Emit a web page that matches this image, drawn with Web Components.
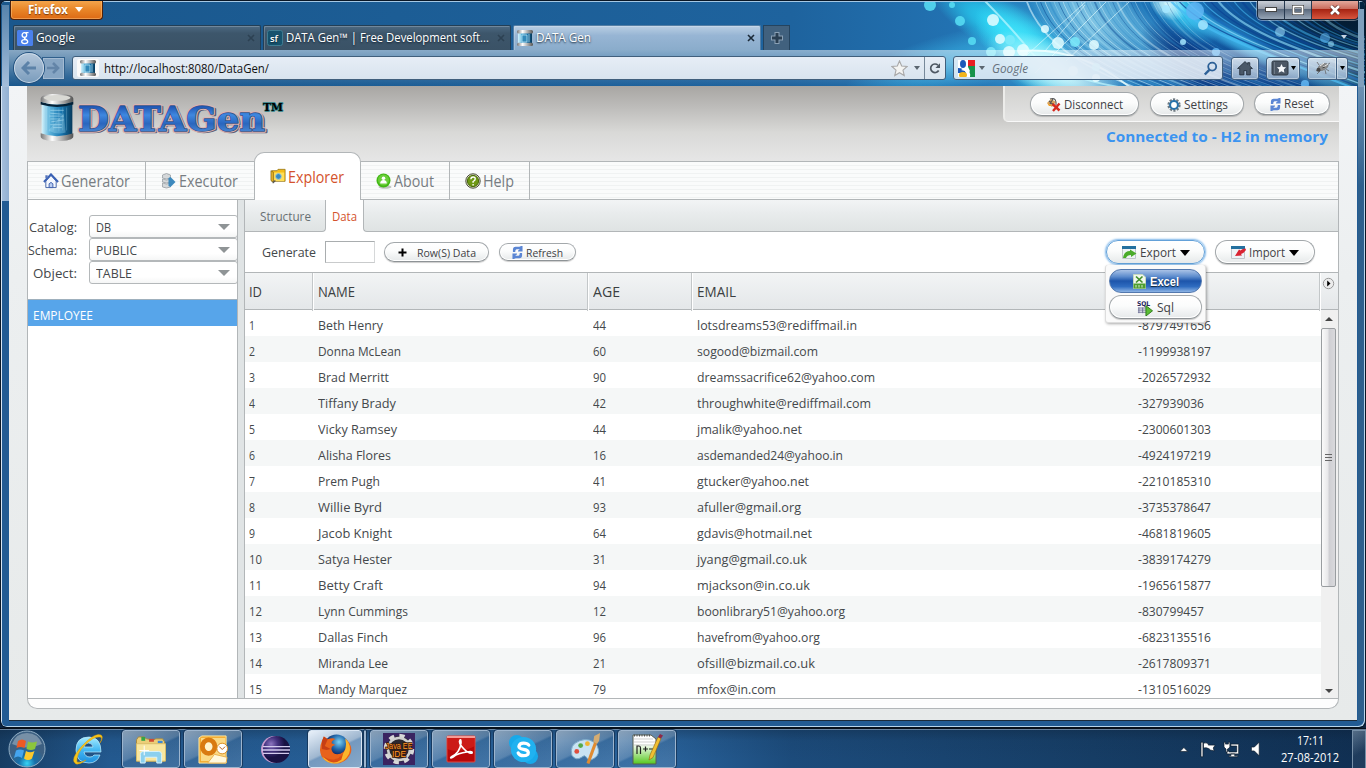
<!DOCTYPE html>
<html lang="en">
<head>
<meta charset="utf-8">
<title>DATA Gen</title>
<style>
html,body{margin:0;width:1366px;height:768px;overflow:hidden;background:#0c2340;font-family:"Open Sans","Noto Sans",sans-serif}
</style>
</head>
<body>
<desk-top></desk-top>
<script>
const fitQueue=[];
function define(name,html,setup){
  customElements.define(name,class extends HTMLElement{
    constructor(){super();this.attachShadow({mode:'open'});}
    connectedCallback(){
      if(this.ready)return;this.ready=true;
      this.shadowRoot.innerHTML=typeof html==='function'?html(this):html;
      if(setup)setup(this);
    }
  });
}
/* Text run whose glyphs are condensed or widened to a set advance width */
define('fit-text',`<style>:host{display:inline-block;white-space:nowrap;flex:none}span{display:inline-block;transform-origin:0 50%}</style><span><slot></slot></span>`,el=>fitQueue.push(el));

const cyl=`<linearGradient id="m"><stop offset="0" stop-color="#777"/><stop offset=".35" stop-color="#fff"/><stop offset="1" stop-color="#555"/></linearGradient><linearGradient id="g"><stop offset="0" stop-color="#d8f4fc"/><stop offset=".25" stop-color="#5eb4dc"/><stop offset=".65" stop-color="#1674ae"/><stop offset="1" stop-color="#073a5c"/></linearGradient>`;
const ICONS={
google:`<svg viewBox="0 0 16 16"><rect width="16" height="16" rx="1.5" fill="#4a80ec"/><g fill="none" stroke="#fff" stroke-width="1.3"><circle cx="7.4" cy="5" r="2.300"/><path d="M8.500 2.700h3M8.200 7.400c-2 1 .6 1.600 1.800 2.600"/><ellipse cx="7.700" cy="11.600" rx="3" ry="2"/></g></svg>`,
sf:`<svg viewBox="0 0 16 16"><rect x=".5" y=".5" width="15" height="15" rx="2" fill="#16536e" stroke="#3f7c92"/><text x="3" y="11.500" font-family="Open Sans" font-size="9.500" font-weight="600" fill="#fff">sf</text></svg>`,
db:`<svg viewBox="0 0 16 16"><defs>${cyl}</defs><path d="M1 2h14v12H1z" fill="url(#g)"/><path d="M5 5h5v7H5zM3 4v8M12 4v8" stroke="#c5ecf8" stroke-width=".7" fill="#3289b9"/><rect x="0" y="0" width="16" height="3.500" rx="1.500" fill="url(#m)"/><rect x="0" y="12.800" width="16" height="3.200" rx="1.500" fill="url(#m)"/></svg>`,
logo:`<svg viewBox="0 0 36 50"><defs>${cyl}</defs><path d="M2 7h32v36q-16 6-32 0z" fill="url(#g)"/><path d="M1 8q17 6 34 0v3q-17 5-34 0z" fill="#052238"/><g stroke="#bfe9f7" stroke-width=".7" opacity=".8"><path d="M7 13v25M10 14v26M28 14v24M14 15v23M20 15v24M24 14v24" opacity=".45"/><path d="M11 17h14M11 20l12 1M10 23h15M11 26h10M12 29l13-2M11 32h12M14 35h9"/></g><path d="M9 38l16-18 2 20q-9 3-18-2" fill="#b7e9f8" opacity=".3"/><path d="M1 5q0-5 17-5t17 5v3q-17 6-34 0z" fill="url(#m)"/><ellipse cx="18" cy="4" rx="14" ry="3" fill="#d9d9d4"/><path d="M1 41q17 6 34 0v3q0 5-17 5T1 44z" fill="url(#m)"/></svg>`,
home:`<svg viewBox="0 0 16 16"><path d="M8 1.500L1 8h2v6h4v-4h2.500v4H13V8h2L12.500 5.700V2.500h-2v1.400z" fill="#4a5868" stroke="#26323f" stroke-width=".8"/></svg>`,
bm:`<svg viewBox="0 0 18 16"><rect x="1" y="1" width="16" height="14" rx="1.500" fill="#4b5765" stroke="#2e3843"/><path d="M10.500 4l1.400 2.900 3.200.4-2.300 2.200.6 3.200-2.900-1.500-2.900 1.500.6-3.200-2.300-2.200 3.200-.4z" fill="#f4f7fa"/><path d="M3.500 2v12" stroke="#6d7986"/></svg>`,
bug:`<svg viewBox="0 0 18 16"><path d="M3 11l4-3M4 14l4-4M13 9l3 2M12 10l1 4M6 5L4 2M14 5l3-2" stroke="#666" stroke-width=".8"/><ellipse cx="10" cy="7" rx="5.500" ry="3" fill="#8b8b8b" stroke="#666" stroke-width=".5" transform="rotate(-25 10 7)"/><path d="M7 6l4-3M9 8l6-4" stroke="#eee"/><circle cx="5.500" cy="9.800" r="2" fill="#444"/><path d="M9 8l3-1" stroke="#444"/></svg>`,
star:`<svg viewBox="0 0 18 18"><path d="M9 1l2.300 5.300 5.700.6-4.300 3.800 1.300 5.700L9 13.400 4 16.400l1.300-5.700L1 6.900l5.700-.6z" fill="#f4f4f2" stroke="#a9a9a9" stroke-width="1.200"/></svg>`,
reload:`<svg viewBox="0 0 14 14"><path d="M11.300 9.300A5 5 0 1 1 10.500 3.200" fill="none" stroke="#4e5863" stroke-width="2"/><path d="M12.800 1v5.500H7.500z" fill="#4e5863"/></svg>`,
goog4:`<svg viewBox="0 0 17 17"><path fill="#fff" d="M0 0h17v17H0z"/><path d="M9 0h8v6H9z" fill="#e81e22"/><path d="M10 6h7v11h-5q1-5-3-7z" fill="#16924a"/><path d="M0 8q6 0 8 5H0z" fill="#1d58b8"/><ellipse cx="5" cy="4" rx="3" ry="4" fill="#1d58b8"/><ellipse cx="5" cy="15" rx="4" ry="3" fill="#f2b51b"/><path d="M8 0h2v7l2 4-2 3-3-3-4-1 5-3z" fill="#fff"/></svg>`,
mag:`<svg viewBox="0 0 15 15"><circle cx="9.200" cy="5.600" r="4" fill="none" stroke="#2c6097" stroke-width="1.800"/><path d="M6.300 8.800L1.800 13.500" stroke="#2c6097" stroke-width="2.400"/></svg>`,
disc:`<svg viewBox="0 0 15 15"><path d="M1 6l4-4 5 3-4 5z" fill="#d9a35c"/><path d="M1 6l2 3h3" fill="#f29b1d"/><path d="M4 2q5-2 6 3v3M3 4l6 5M7 2l-3 5" stroke="#555" stroke-width="1.100" fill="none"/><path d="M6.500 7l7 6.500M13.500 6.500L7 14" stroke="#d72b1f" stroke-width="2.400"/></svg>`,
gear:`<svg viewBox="0 0 15 15"><circle cx="7.500" cy="7.500" r="5.800" fill="none" stroke="#707a82" stroke-width="2.600" stroke-dasharray="2.300 1.350"/><circle cx="7.500" cy="7.500" r="4.200" fill="#fff" stroke="#2871a9" stroke-width="2.200"/></svg>`,
sync:`<svg viewBox="0 0 12 14"><path d="M1 6.500V4Q1 .8 4 .8h4L10 0h1.500v6H6.500V5l2-1.500H5Q3.500 3.500 3.500 6.500zM11 7.500V10q0 3.200-3 3.200H4L2 14H.5V8h5v1l-2 1.500H7q1.500 0 1.500-3z" fill="#5b86d4"/></svg>`,
house:`<svg viewBox="0 0 17 16"><path d="M3 8l5.500-6L14 8v7H3z" fill="#f3f7fe" stroke="#4262a8"/><path d="M1 9l7.500-8L16 9" fill="none" stroke="#3b62b5" stroke-width="2.200"/><path d="M2.500 2h2.500v3H2.500z" fill="#5776bc"/><path d="M6.500 15v-4q2-3 4 0v4z" fill="#b9cdf1" stroke="#3d5fae"/></svg>`,
exec:`<svg viewBox="0 0 15 16"><g fill="#d5d8da" stroke="#8f979c" stroke-width=".7"><path d="M1 2q4-3 8 0v3q-4 2-8 0zM1 6q4 2 8 0v3q-4 2-8 0zM1 10q4 2 8 0v4q-4 2-8 0z"/></g><path d="M7 5l2-1 5 5-5 5-2-1z" fill="#3d89bd"/></svg>`,
folder:`<svg viewBox="0 0 18 16"><path d="M2 2h6l1-1.500h8V14H2z" fill="#f5bd18" stroke="#8c6c10" stroke-width=".8"/><path d="M4 4h12v9.500H4z" fill="#ffdf58"/><path d="M1 2l3 2v11l-3-2z" fill="#dfae26" stroke="#6d5410" stroke-width=".6"/><circle cx="9.500" cy="8.500" r="3.200" fill="#368bc0" stroke="#9ac7dc"/><path d="M3 16l3-3" stroke="#555" stroke-width="1.500"/></svg>`,
about:`<svg viewBox="0 0 16 16"><ellipse cx="9" cy="14" rx="6.500" ry="1.800" fill="#bfc3bf"/><circle cx="7.500" cy="7.500" r="7" fill="#42b814"/><circle cx="7.500" cy="7" r="5.500" fill="#6bce3a"/><circle cx="7.500" cy="5.300" r="1.800" fill="#fff"/><path d="M4.200 10.500q0-3.500 3.300-3.500t3.300 3.500z" fill="#fff"/></svg>`,
help:`<svg viewBox="0 0 16 16"><circle cx="8" cy="8" r="7.200" fill="#dcdec0" stroke="#4c4f3e" stroke-width="1"/><circle cx="8" cy="8" r="5.600" fill="#6f9914" stroke="#486b09"/><path d="M5.900 6.200q0-2.200 2.200-2.200t2.100 2q0 1.300-2.100 2.500v1.200M8.100 11v1.500" stroke="#fff" stroke-width="1.400" fill="none"/></svg>`,
plus:`<svg viewBox="0 0 9 9"><path d="M4.500 .5v8M.5 4.500h8" stroke="#000" stroke-width="2"/></svg>`,
exp:`<svg viewBox="0 0 15 13"><path d="M.5.5h13v12H.5z" fill="#eef2f6" stroke="#c0c6cc"/><path d="M0 0h14v3H0z" fill="#23709f"/><path d="M1 12q1-7 7-7V3.500l6.500 4L9 11V9Q5 9 4 12z" fill="#4bab2b"/></svg>`,
imp:`<svg viewBox="0 0 15 13"><path d="M.5.5h13v12H.5z" fill="#eef2f6" stroke="#c0c6cc"/><path d="M0 0h14v3H0z" fill="#23709f"/><path d="M14.500 2.500q-3 0-5 2L8 3.500 4 10l7-.5-1-1.500q3-1 5-4z" fill="#d92332"/></svg>`,
xls:`<svg viewBox="0 0 13 15"><path d="M1 .5h8.500L12.500 3v11.500H.5V.5z" fill="#f1f7ec" stroke="#c7d8bf"/><path d="M3 2.500l6.500 6M9.500 2.500L3 8.500" stroke="#438f2b" stroke-width="1.700"/><path d="M.5 9.500h12v5H.5z" fill="#4d9e2f"/><path d="M3 11v2.500M6 11v2.500M9 11v2.500" stroke="#d5eccc"/></svg>`,
sql:`<svg viewBox="0 0 17 17"><text x="0" y="6" font-family="DejaVu Sans" font-size="7" font-weight="700" fill="#26265c" textLength="14" lengthAdjust="spacingAndGlyphs">SQL</text><path d="M1 8.500h11M1 10.700h11M1 13h11M2 8v6M6 8v6" stroke="#6d7095" stroke-width="1"/><path d="M9.500 6l7 5.500-7 5.500z" fill="#5bbd35" stroke="#2c7b18"/></svg>`,
start:`<svg viewBox="0 0 38 38"><defs><radialGradient id="o" cy=".9"><stop offset="0" stop-color="#38d4f5"/><stop offset=".45" stop-color="#176fa9"/><stop offset="1" stop-color="#3d6082"/></radialGradient></defs><circle cx="19" cy="19" r="18" fill="url(#o)" stroke="#91aec4"/><path d="M4 14Q8 3 19 3t15 11q-15 7-30 0" fill="#fff" opacity=".3"/><path d="M10 11q4-3 8 0l-1.500 7q-4-2-8 0z" fill="#ee5a24"/><path d="M20 11.500q4 2 9 0l-2 7.500q-4 2-8.500 0z" fill="#8cc63c"/><path d="M8 20.500q4-2 8 0L14 28q-4-3-8 0z" fill="#45a5ee"/><path d="M18 21q4 2.500 8.500 0L24 28.500q-4 3-8 0z" fill="#fdc92c"/></svg>`,
ie:`<svg viewBox="0 0 34 34"><defs><linearGradient id="i" x2="0" y2="1"><stop stop-color="#a5ecff"/><stop offset=".5" stop-color="#45b8f2"/><stop offset="1" stop-color="#1d8ede"/></linearGradient></defs><path d="M30 20H13q1 5 6 5 3 0 4-2h6q-3 8-11 8Q5 31 5 18T18 5q12 0 12 15M13 15h9q-.5-4-4.500-4T13 15" fill="url(#i)" stroke="#bdeeff" stroke-width=".7" fill-rule="evenodd"/><path d="M5 32Q-2 28 11 14T30 3q3 2-1 8 3-6 0-6-6-1-15 8T6 30q4 1 9-2-6 5-10 4" fill="#f7c51a" stroke="#d99d0a" stroke-width=".5"/></svg>`,
explorer:`<svg viewBox="0 0 34 30"><path d="M2 5l2-3h6l2 2 8 1 2-1h7l2 3v20H2z" fill="#eccf78" stroke="#a88a40"/><path d="M7 2h4v4H7z" fill="#34a545"/><path d="M15 4h5v3h-5z" fill="#d14b31"/><path d="M24 6h5v3h-5z" fill="#3c88d4"/><path d="M2 9h30v18H2z" fill="#f8e69f" stroke="#d8bd68"/><path d="M6 29V20q0-3 3-3h16q3 0 3 3v9h-5v-6H11v6z" fill="#8bd0ee" stroke="#d9f4fd"/><path d="M10 11v10M5 16h10" stroke="#fff"/></svg>`,
outlook:`<svg viewBox="0 0 32 30"><path d="M1 3l3-2h25v28H1z" fill="#f2a92d" stroke="#ffe9a4"/><path d="M3 3h25v24H3z" fill="#fbd984"/><ellipse cx="11" cy="12" rx="6.500" ry="7" fill="#fff3cc" stroke="#d97a10" stroke-width="5"/><circle cx="25" cy="14" r="5.500" fill="#fff" stroke="#d98c20"/><path d="M22 12l3 3 3-3" fill="none" stroke="#b35c18"/><path d="M10 29l7-9 13 3-1 6z" fill="#fff8dd" stroke="#e8b14c"/></svg>`,
eclipse:`<svg viewBox="0 0 32 30"><defs><radialGradient id="e" cx=".3" cy=".3"><stop stop-color="#8d76c0"/><stop offset=".5" stop-color="#43317e"/><stop offset="1" stop-color="#191244"/></radialGradient></defs><circle cx="15" cy="15" r="14" fill="#c99ccf"/><circle cx="17" cy="15" r="14" fill="url(#e)"/><path d="M3 12h28M2 15.500h29M3 19h27" stroke="#d4ccef" stroke-width="1.500"/></svg>`,
firefox:`<svg viewBox="0 0 34 32"><defs><radialGradient id="f" cx=".6" cy=".3"><stop stop-color="#7bd2f5"/><stop offset=".6" stop-color="#2166a9"/><stop offset="1" stop-color="#102a67"/></radialGradient></defs><circle cx="18" cy="14" r="13" fill="url(#f)"/><path d="M3 8l2-5 4 3q5-2 8 0-4 1-4 4l4 2q-5 1-4 5 2 6 9 4 8-3 6-15 8 8 4 16-5 9-15 9Q2 30 1 17q0-5 2-9" fill="#e8621b"/><path d="M27 5q7 7 4 16-5 10-15 10-8 0-13-7 10 7 19 0 8-7 5-19" fill="#fbb52d"/><path d="M5 24q12 7 20-4l-2 7q-10 7-18-3" fill="#d94d14"/><path d="M3 8l2-5 4 3-3 7 6 3-4 1-5-1z" fill="#c63f15"/></svg>`,
jee:`<svg viewBox="0 0 32 32"><rect width="32" height="32" fill="#3a2461"/><circle cx="16" cy="16" r="13" fill="#34313b" stroke="#d8d8d8" stroke-width="4.500" stroke-dasharray="5.100 5.110"/><circle cx="16" cy="16" r="11" fill="#2b2830" stroke="#d0d0d0" stroke-width="2.500"/><g font-family="Liberation Sans" font-size="9.500" fill="#ff9a2b" stroke="#3a1808" stroke-width="1.600" paint-order="stroke"><text x="2.500" y="15.500" textLength="27" lengthAdjust="spacingAndGlyphs">Java EE</text><text x="9" y="24" textLength="14" lengthAdjust="spacingAndGlyphs">IDE</text></g></svg>`,
pdf:`<svg viewBox="0 0 30 28"><rect x="1" y="1" width="28" height="26" rx="1" fill="#b80709" stroke="#e2483f"/><path d="M1 1h28v2H1z" fill="#f59b95"/><path d="M1 3h28v8Q14 19 1 14z" fill="#d92a22" opacity=".6"/><path d="M5 22Q14 18 15 8q0-4-1-3-2 3 4 9 5 5 8 4 1-2-5-1-9 1-14 5-3 2-2 0" fill="none" stroke="#fff" stroke-width="1.700"/></svg>`,
skype:`<svg viewBox="0 0 32 32"><circle cx="9" cy="9" r="8" fill="#17a9ea"/><circle cx="23" cy="23" r="8" fill="#17a9ea"/><circle cx="16" cy="16" r="13" fill="#20b2f0"/><path d="M21.500 11.500Q20 9.500 16 9.500t-4.800 3.200q0 2.500 4.800 3.200t5 3.300q0 3.200-5 3.200-4.200 0-5.500-2.800" fill="none" stroke="#fff" stroke-width="3.300" stroke-linecap="round"/></svg>`,
paint:`<svg viewBox="0 0 34 34"><path d="M3 23Q0 12 11 8t18 5q4 9-3 13-6 4-8-1-2-3-5 0-6 4-10-2" fill="#c9e3f3" stroke="#7ba9c8"/><circle cx="8" cy="19" r="2.500" fill="#df4e3e"/><circle cx="12" cy="13" r="2.500" fill="#56a949"/><circle cx="19" cy="11" r="2.500" fill="#f0b532"/><path d="M26 9l3 1-8 22-3-1z" fill="#e08b31"/><path d="M25 9l1-6 6-3-1 8-2 3z" fill="#d5ac72"/></svg>`,
npp:`<svg viewBox="0 0 32 32"><defs><linearGradient id="n" x2="0" y2="1"><stop offset=".3" stop-color="#fff"/><stop offset="1" stop-color="#54c81e"/></linearGradient></defs><path d="M2 2h18l5 4v25H2z" fill="url(#n)" stroke="#575f52"/><path d="M3 6h19M3 9h22M3 12h22" stroke="#bbb" stroke-width=".7"/><path d="M3 2.500h17" stroke="#555" stroke-width="2" stroke-dasharray="1 1.500"/><path d="M6 21v-8h2q1.500 0 1.500 2v6M12 16h5M14.500 13.500v5M18 16h5" stroke="#222" fill="none" stroke-width="1.200"/><path d="M27 4l3 1.500-8 19-4 2.500 1-5z" fill="#f1bf32" stroke="#906414" stroke-width=".6"/><path d="M27 4l2-3 3 1.500-2 3z" fill="#8d2949"/></svg>`,
tray:`<svg viewBox="0 0 92 20"><g fill="#fff" stroke="#0b1a2a" stroke-width=".7"><path d="M1 12.500l4-4 4 4z"/><path d="M22.500 3h2v15h-2zM25 4q3-1 5 1v1l7 0-2 3 1 3-4-1-1-1q-3-2-6-1z"/><path d="M53 5h8v10h-12v-3h2v1h8V7h-6zM53 15h4v2h3v1h-9v-1h2z"/><path d="M46 3h1.500v2h3V3H52v5l-2 2h-.5v3H48v-3l-2-2z"/><path d="M74 8h3l5-5v14l-5-5h-3z"/></g></svg>`
};
define('x-icon',el=>{const w=el.getAttribute('w'),h=el.getAttribute('h');return `<style>:host{display:block;flex:none;width:${w}px;height:${h}px}svg{display:block;width:100%;height:100%}</style>${ICONS[el.getAttribute('name')]}`;});

/* Browser chrome */
define('ff-tab',el=>`<style>:host{display:flex;align-items:center;box-sizing:border-box;width:${el.getAttribute('w')||248}px;height:25px;padding:0 5px 1px 4px;gap:3px;flex:none;border:1px solid #233f56;border-bottom:0;border-radius:2px 2px 0 0;background:linear-gradient(#4d6a83,#3d566b 30%,#3a5266);box-shadow:inset 1px 1px 0 #ffffff35;color:#fff;font-size:12px;text-shadow:0 1px 2px #102030}
:host([active]){background:linear-gradient(#b9cee3,#97b5d4 40%,#8aaccb);border-color:#537ea5}
b{margin-left:auto;color:#22323f;font-size:0}b svg{width:8px;height:8px;display:block;opacity:.45}:host([active]) b svg{opacity:1}</style>
<x-icon name="${el.getAttribute('icon')}" w="16" h="16"></x-icon><slot></slot><b><svg viewBox="0 0 8 8"><path d="M1 1l6 6M7 1L1 7" stroke="#1b2a38" stroke-width="1.600"/></svg></b>`);
define('title-bar',`<style>:host{display:flex;height:24px;padding-left:10px;box-sizing:border-box;justify-content:space-between;align-items:flex-start}
.ff{width:93px;height:20px;box-sizing:border-box;border:1px solid #51220a;border-top:0;border-radius:0 0 4px 4px;background:linear-gradient(#f5a850,#e98628 50%,#dd6a15);box-shadow:inset 0 0 0 1px #ffc58080;color:#fff;font-weight:700;font-size:12px;display:flex;align-items:center;padding:0 0 1px 17px;gap:7px;text-shadow:0 1px 1px #7a3a08}
.c{display:flex;height:19px;margin-right:7px;border:1px solid #1c2a3c;border-top:0;border-radius:0 0 5px 5px;overflow:hidden;box-shadow:0 0 0 1px #ffffff60}
.c i{display:flex;align-items:center;justify-content:center;width:26px;border-right:1px solid #273950;background:linear-gradient(#d0d5dd,#99a1ae 45%,#5b6a7e 50%,#98a6b7)}
.c i:last-child{width:46px;border:0;background:linear-gradient(#e7b0a4,#cc6f60 45%,#a82413 50%,#d8563e)}</style>
<div class="ff"><fit-text w="40">Firefox</fit-text><svg width="8" height="5"><path d="M0 0h8L4 5z" fill="#fff"/></svg></div>
<div class="c"><i><svg width="12" height="5"><rect x=".5" y=".5" width="11" height="4" fill="#fff" stroke="#444"/></svg></i><i><svg width="12" height="10"><rect x="1.500" y="1.500" width="9" height="7" fill="none" stroke="#333" stroke-width="3"/><rect x="1.500" y="1.500" width="9" height="7" fill="none" stroke="#fff" stroke-width="1.800"/></svg></i><i><svg width="12" height="10"><path d="M2 1l8 8M10 1L2 9" stroke="#5c2a22" stroke-width="4"/><path d="M2 1l8 8M10 1L2 9" stroke="#fff" stroke-width="2.600"/></svg></i></div>`);
define('tab-strip',`<style>:host{display:flex;height:26px;padding:1px 19px 0 13px;gap:2px;box-sizing:border-box}.p{width:27px;height:25px;box-sizing:border-box;background:#41617e;border:1px solid #25445f;border-bottom:0;display:flex;align-items:center;justify-content:center}.d{margin:10px 0 0 auto}ff-tab{margin-right:0}</style>
<ff-tab icon="google" style="padding-left:3px"><fit-text w="39">Google</fit-text></ff-tab><ff-tab icon="sf" style="padding-left:3px"><fit-text w="203">DATA Gen™ | Free Development soft...</fit-text></ff-tab><ff-tab icon="db" active style="padding-left:3px"><fit-text w="55">DATA Gen</fit-text></ff-tab>
<div class="p"><svg width="12" height="12"><path d="M6 0v12M0 6h12" stroke="#8aa0b4" stroke-width="5"/><path d="M6 1v10M1 6h10" stroke="#2a3f52" stroke-width="3"/></svg></div><svg class="d" width="6" height="4"><path d="M0 0h6L3 4z" fill="#c8d6e3"/></svg>`);
define('nav-bar',`<style>:host{display:flex;align-items:center;height:36px;box-sizing:border-box;padding:0 10px 0 5px;background:linear-gradient(#ffffff7a,#ffffff55 30%,#ffffff18 75%,#fff0)}
.b{width:30px;height:30px;box-sizing:border-box;border-radius:50%;border:1px solid #e0e9f2b0;background:linear-gradient(#b3c6da,#7b9dbd);box-shadow:0 0 0 1px #24527f;display:flex;align-items:center;justify-content:center;z-index:1}
.f{width:23px;height:23px;margin-left:-2px;box-sizing:border-box;border:1px solid #2f5f8b;box-shadow:inset 0 0 0 1px #ffffff40;background:#86a5c3;display:flex;align-items:center;justify-content:center}
.u,.s{height:24px;box-sizing:border-box;border:1px solid #405f7c;border-radius:3px;background:linear-gradient(#e6edf6,#d9e4ee);display:flex;align-items:center;font-size:12px;color:#111}
.u{width:875px;margin-left:7px;padding-left:4px}.fav{width:22px;height:18px;background:#fafafa;border-radius:2px;display:flex;align-items:center;justify-content:center;margin-right:5px}
.s{width:270px;margin-left:7px;padding:0 4px 0 4px;color:#66717c;font-style:italic;background:#e4edf6e0}
.r{display:flex;align-items:center;margin-left:auto;height:100%}.r em{width:20px;height:22px;margin-left:4px;border-left:1px solid #77899a;display:flex;align-items:center;justify-content:center}
.k{height:23px;box-sizing:border-box;border:1px solid #3f5f80;border-radius:3px;background:linear-gradient(#dce6f0e0,#9db4cdd0);box-shadow:inset 0 0 0 1px #ffffff60;display:flex;align-items:center;justify-content:center;gap:2px}</style>
<div class="b"><svg width="16" height="14"><path d="M8 1L2 7l6 6M2 7h13" fill="none" stroke="#5c82a8" stroke-width="3"/></svg></div><div class="f"><svg width="14" height="12"><path d="M7 1l5 5-5 5M12 6H1" fill="none" stroke="#6385a8" stroke-width="2.600"/></svg></div>
<div class="u"><span class="fav"><x-icon name="db" w="16" h="16"></x-icon></span><fit-text w="165">http://localhost:8080/DataGen/</fit-text><span class="r"><x-icon name="star" w="17" h="17"></x-icon><svg width="6" height="4" style="margin-left:6px"><path d="M0 0h6L3 4z" fill="#5b6670"/></svg><em><x-icon name="reload" w="12" h="13"></x-icon></em></span></div>
<div class="s"><x-icon name="goog4" w="17" h="17"></x-icon><svg width="6" height="4" style="margin:0 7px 0 4px"><path d="M0 0h6L3 4z" fill="#5b6670"/></svg><fit-text w="36">Google</fit-text><span class="r"><x-icon name="mag" w="15" h="15"></x-icon></span></div>
<div class="k" style="width:28px;margin-left:8px"><x-icon name="home" w="18" h="17"></x-icon></div>
<div class="k" style="width:34px;margin-left:7px"><x-icon name="bm" w="18" h="16"></x-icon><svg width="5" height="4"><path d="M0 0h5L2.500 4z"/></svg></div>
<div class="k" style="width:30px;margin-left:7px;border-radius:3px 0 0 3px"><x-icon name="bug" w="18" h="16"></x-icon></div><div class="k" style="width:12px;margin-left:-1px;border-radius:0 3px 3px 0"><svg width="5" height="4"><path d="M0 0h5L2.500 4z"/></svg></div>`);

/* Persona artwork behind the browser chrome: glow, strands and bokeh dots */
define('persona-art',()=>{
  let lines='',dots='';
  for(let i=0;i<34;i++)lines+=`<path d="M${1025+i*4.500} -5C${1040+i*4.500} ${46-i*.3} ${1095+i*4} ${72-i*.4} ${1150+i*5.500} 92" stroke="${['#d9f4fd','#2f8cc9','#9ad6ef','#0b4a92'][i%4]}" stroke-width="${i%5?1:1.800}" opacity="${.6-i*.01}"/>`;
  for(let i=0;i<20;i++)lines+=`<path d="M${1166+i*8} -6C${1190+i*7} ${28-i*.4} ${1260+i*5} ${50-i*.5} ${1366+i*3} ${92-i*2.400}" stroke="${['#46b9f2','#0a3f93','#8fdcfb','#1769bb'][i%4]}" stroke-width="${i%3?1.200:2.200}" opacity="${.75-i*.02}"/>`;
  [[930,4,6],[952,4,3],[960,20,5],[972,40,4],[993,19,6],[1000,38,5],[1010,39,5],[1009,51,6],[1023,49,6],[991,51,5],[1045,28,4],[1058,42,6],[1075,41,5],[1094,44,5],[1073,70,5],[1096,66,4],[1096,77,4],[1183,41,3],[1216,51,4],[1203,24,5],[1195,10,9],[1280,31,5],[1325,37,5],[1331,43,3],[1305,83,4],[1166,8,4]].forEach((p,i)=>dots+=`<circle cx="${p[0]}" cy="${p[1]}" r="${p[2]}" fill="${i<4?'#58dff5':i<17?(i%3?'#e4fdff':'#7beafa'):['#5fb6f4','#a5e6ff'][i%2]}" opacity="${i>20&&i<24?.55:.85}"/>`);
  /* x, y, horizontal radius, vertical radius, rotation, rgb, alpha */
  const spots=[[960,60,120,30,-15,'54,176,226',.8],[1000,25,80,26,30,'38,214,246',1],[1030,52,70,34,45,'70,232,252',1],[1060,72,80,28,25,'215,252,255',.95],[1092,22,80,44,45,'140,205,232',.9],[1140,32,80,22,45,'96,180,222',.7],[1195,66,66,28,38,'6,42,116',1],[1262,74,90,24,15,'8,60,140',.8],[1180,8,48,22,40,'60,214,250',1],[1168,4,20,14,30,'240,255,255',.9],[1235,38,80,12,28,'70,196,246',.9],[1322,74,60,16,20,'84,180,228',.7],[1338,18,90,34,12,'3,26,48',1]];
  const divs=spots.map(([x,y,rx,ry,a,c,o])=>`<i style="left:${x-rx}px;top:${y-ry}px;width:${rx*2}px;height:${ry*2}px;transform:rotate(${a}deg);background:radial-gradient(closest-side,rgba(${c},${o}),rgba(${c},${o*.65}) 45%,rgba(${c},0))"></i>`).join('');
  return `<style>:host{display:block;position:absolute;inset:0 0 auto 0;height:86px;overflow:hidden;background:linear-gradient(90deg,#1a578c,#1e639e 58%,#2272b2 70%,#2a8ecb 78%,#155fa8 88%,#0c4a86 95%,#04304f)}i,svg{position:absolute;display:block}svg{left:0;top:0}</style>${divs}<svg width="1366" height="86"><g fill="none">${lines}<path d="M1018 62L1092-5M1035 72L1112-5M1045 50L1085 4M1066 60L1130 0" stroke="#e9ffff" stroke-width="1" opacity=".6"/><path d="M980-5Q1010 25 1030 50T1130 88" stroke="#bff8ff" stroke-width="2" opacity=".7"/><path d="M1020 50Q1080 45 1132 88" stroke="#e6ffff" stroke-width="2" opacity=".8"/></g>${dots}</svg>`;});

/* Application */
define('pill-button',el=>{const g=n=>el.getAttribute(n);return `<style>:host{display:flex;align-items:center;justify-content:center;gap:${g('gap')||3}px;box-sizing:border-box;width:${g('w')}px;height:${g('h')}px;flex:none;border:1px solid #a3a8ab;border-bottom-color:#8e9396;border-radius:13px;background:linear-gradient(#fff,#fbfcfc 45%,#e6e9ea);box-shadow:0 1px 1px #0003,inset 0 0 0 1px #fff;color:#3f4245;font-size:${g('fs')||12}px;line-height:16px;padding-top:1px}
:host([focus]){border-color:#62a0d8;box-shadow:0 0 2px 1px #7db6ea}:host([blue]){color:#fff;font-weight:700;font-family:"Liberation Sans",sans-serif;border-color:#5378ae;background:linear-gradient(#a9c2e6,#5d8ccd 30%,#1d55ab 50%,#2f6cc0 75%,#8db4e4);box-shadow:none;text-shadow:0 1px 1px #123}svg{margin-left:1px}</style><x-icon name="${g('icon')}" w="${g('iw')}" h="${g('ih')}"></x-icon><slot></slot>${el.hasAttribute('arrow')?'<svg width="10" height="6"><path d="M0 0h10L5 6z"/></svg>':''}`;});
define('app-header',`<style>:host{display:flex;justify-content:space-between;height:75px;background:linear-gradient(#a8a6a3,#bdbcba 28%,#d9d9d7 62%,#e6e6e6)}.l{padding:8px 0 0 12px;display:flex}.l>svg{display:block;overflow:visible}.r{width:336px}.p{height:36px;border-bottom:1px solid #f8f8f8;background:linear-gradient(#d0d0ce,#e4e4e3);border-left:2px solid #ececea;box-sizing:border-box;padding:6px 9px 0 25px;display:flex;border-radius:0 0 0 5px}.c{text-align:right;padding:4px 11px 0 0;font-size:15px;line-height:20px;font-weight:700;color:#3b94f0}</style>
<div class="l"><x-icon name="logo" w="36" h="48"></x-icon><svg width="215" height="48"><defs><linearGradient id="t" x2="0" y2="1"><stop offset=".15" stop-color="#1b4fae"/><stop offset=".4" stop-color="#3f88e0"/><stop offset=".62" stop-color="#2a66be"/><stop offset=".8" stop-color="#4382d0"/><stop offset="1" stop-color="#153c7c"/></linearGradient></defs><g font-family="DejaVu Serif" font-weight="700" stroke-linejoin="round"><text x="4" y="38" font-size="33" textLength="188" lengthAdjust="spacingAndGlyphs" fill="#2a2e4c" stroke="#2a2e4c" stroke-width="2.500" opacity=".7">DATAGen</text><g font-size="33"><text x="3" y="36.500" textLength="187" lengthAdjust="spacingAndGlyphs" stroke="#dfb3b2" stroke-width="3.500">DATAGen</text><text x="3" y="36.500" textLength="187" lengthAdjust="spacingAndGlyphs" fill="url(#t)" stroke="#35558c" stroke-width="1.500" paint-order="stroke">DATAGen</text></g><text x="188" y="17" font-size="11.500" textLength="20" lengthAdjust="spacingAndGlyphs" stroke="#2b8087" stroke-width="1.500" paint-order="stroke">TM</text></g></svg></div>
<div class="r"><div class="p"><pill-button w="109" h="24" icon="disc" iw="15" ih="15"><fit-text w="59">Disconnect</fit-text></pill-button><pill-button w="94" h="24" icon="gear" iw="14" ih="14" style="margin-left:11px"><fit-text w="44">Settings</fit-text></pill-button><pill-button w="76" h="23" icon="sync" iw="11" ih="13" style="margin-left:10px"><fit-text w="30">Reset</fit-text></pill-button></div><div class="c"><fit-text w="222" style="text-align:left">Connected to - H2 in memory</fit-text></div></div>`);
define('app-tab',el=>`<style>:host{display:flex;align-items:center;justify-content:center;gap:2px;box-sizing:border-box;width:${el.getAttribute('w')}px;height:37px;border-right:1px solid #b2b6b8;color:#777d82;font-size:15.500px;line-height:20px;padding-right:1px}
:host([active]){height:48px;margin:-10px 0 -1px -1px;background:#fff;border:1px solid #b2b6b8;border-bottom:0;border-radius:10px 10px 0 0;color:#d4532d;padding:1px 2px 0 0;z-index:1}
:host([active]) x-icon{margin-top:-2px}</style><x-icon name="${el.getAttribute('icon')}" w="16" h="16"></x-icon><slot></slot>`);
define('app-tabs',`<style>:host{display:flex;height:39px;box-sizing:border-box;border:1px solid #b2b6b8;border-width:1px 1px 1px 1px;background:repeating-linear-gradient(#fafbfb 0 3px,#f0f2f2 3px 4px)}</style>
<app-tab w="118" icon="house"><fit-text w="69">Generator</fit-text></app-tab><app-tab w="109" icon="exec"><fit-text w="59">Executor</fit-text></app-tab><app-tab w="107" icon="folder" active><fit-text w="56">Explorer</fit-text></app-tab><app-tab w="89" icon="about"><fit-text w="40">About</fit-text></app-tab><app-tab w="80" icon="help"><fit-text w="31">Help</fit-text></app-tab>`);
define('combo-box',el=>`<style>:host{display:flex;align-items:center;height:23px;font-size:12.500px;color:#44484b}label{width:49px;text-align:right;margin:1px 12px 0 0}fit-text{text-align:left}div{flex:1;height:23px;box-sizing:border-box;border:1px solid #b4b8ba;border-radius:3px;background:linear-gradient(#fff 70%,#f5f6f6);display:flex;align-items:center;justify-content:space-between;padding:1px 7px 0 6px}</style><label><fit-text w="${el.getAttribute('lw')}">${el.getAttribute('label')}</fit-text></label><div><slot></slot><svg width="12" height="6"><path d="M0 0h12L6 6z" fill="#8f9496"/></svg></div>`);
define('side-panel',`<style>:host{display:block;width:210px;border-left:1px solid #b2b6b8;background:#fff;flex:none}.f{padding:15px 0 15px;margin:0}.e{height:26px;border-top:1px solid #9fb0bd;background:#57a5ea;color:#fff;font-size:12px;line-height:31px;padding-left:5px}</style><div class="f"><combo-box label="Catalog:" lw="48"><fit-text w="15">DB</fit-text></combo-box><combo-box label="Schema:" lw="49"><fit-text w="41">PUBLIC</fit-text></combo-box><combo-box label="Object:" lw="44"><fit-text w="36">TABLE</fit-text></combo-box></div><div class="e"><fit-text w="60">EMPLOYEE</fit-text></div>`);
define('sub-tabs',`<style>:host{display:flex;height:32px;font-size:12px;line-height:34px;color:#686f73;text-align:center}div{box-sizing:border-box;border:0 solid #b2b6b8;border-bottom-width:1px;background:linear-gradient(#f2f4f5,#e9eced 40%,#dfe3e3)}.a{width:81px;border-right-width:1px;border-radius:0 0 4px 0}.b{width:37px;background:#fff;border:0;color:#d4532d}.c{flex:1;border-left-width:1px;border-radius:0 0 0 4px}</style><div class="a"><fit-text w="51">Structure</fit-text></div><div class="b"><fit-text w="25">Data</fit-text></div><div class="c"></div>`);
define('tool-bar',`<style>:host{display:flex;align-items:center;height:40px;padding:0 23px 0 17px;font-size:12.500px;color:#44484b;box-sizing:border-box}i{width:50px;height:22px;box-sizing:border-box;border:1px solid #a9adaf;border-right-color:#d6d8d9;border-bottom-color:#c9cbcc;margin:0 9px}.x{margin-left:auto}</style><fit-text w="54">Generate</fit-text><i></i><pill-button w="105" h="20" icon="plus" iw="9" ih="9" gap="10" fs="11"><fit-text w="59">Row(S) Data</fit-text></pill-button><pill-button w="77" h="18" icon="sync" iw="11" ih="13" fs="11" style="margin-left:10px"><fit-text w="37">Refresh</fit-text></pill-button><pill-button class="x" w="99" h="24" icon="exp" iw="15" ih="13" arrow focus><fit-text w="36">Export</fit-text></pill-button><pill-button w="100" h="24" icon="imp" iw="15" ih="13" arrow style="margin-left:10px"><fit-text w="36">Import</fit-text></pill-button>`);
define('export-menu',`<style>:host{position:absolute;left:860px;top:65px;width:101px;height:58px;box-sizing:border-box;padding:4px 3px;background:#fafafa;border:1px solid #ddd;border-top:0;border-radius:3px;box-shadow:1px 1px 3px #0005;display:flex;flex-direction:column;gap:2px}</style><pill-button w="93" h="24" icon="xls" iw="13" ih="15" gap="4" blue><fit-text w="29">Excel</fit-text></pill-button><pill-button w="93" h="24" icon="sql" iw="16" ih="16" gap="4"><fit-text w="17">Sql</fit-text></pill-button>`);
const ROWS=[["Beth Henry",65,44,"lotsdreams53@rediffmail.in",160,"-8797491656"],["Donna McLean",83,60,"sogood@bizmail.com",121,"-1199938197"],["Brad Merritt",71,90,"dreamssacrifice62@yahoo.com",178,"-2026572932"],["Tiffany Brady",78,42,"throughwhite@rediffmail.com",174,"-327939036"],["Vicky Ramsey",79,44,"jmalik@yahoo.net",105,"-2300601303"],["Alisha Flores",73,16,"asdemanded24@yahoo.in",146,"-4924197219"],["Prem Pugh",62,41,"gtucker@yahoo.net",112,"-2210185310"],["Willie Byrd",64,93,"afuller@gmail.org",104,"-3735378647"],["Jacob Knight",74,64,"gdavis@hotmail.net",115,"-4681819605"],["Satya Hester",74,31,"jyang@gmail.co.uk",110,"-3839174279"],["Betty Craft",65,94,"mjackson@in.co.uk",113,"-1965615877"],["Lynn Cummings",90,12,"boonlibrary51@yahoo.org",148,"-830799457"],["Dallas Finch",70,96,"havefrom@yahoo.org",123,"-6823135516"],["Miranda Lee",70,21,"ofsill@bizmail.co.uk",118,"-2617809371"],["Mandy Marquez",89,79,"mfox@in.com",79,"-1310516029"]];
define('data-grid',()=>{const t=(s,w)=>`<span><fit-text w="${w}">${s}</fit-text></span>`;
return `<style>:host{display:flex;flex-direction:column;flex:1;min-height:0;color:#44484b}.h,.r{display:grid;grid-template-columns:68px 275px 104px 441px 1fr}.h{height:38px;box-sizing:border-box;border:1px solid #b2b6b8;border-width:1px 0;background:linear-gradient(#f2f4f5,#e4e7e9);font-size:14.500px;line-height:38px;color:#3b3f42;grid-template-columns:68px 275px 104px 441px 187px 1fr}.h span{border-right:1px solid #c3c7c9;box-shadow:1px 0 #fff;padding-left:4px}.h span+span{padding-left:5px}.h span:last-child{border:0;box-shadow:none;padding:4px 0 0 2px;line-height:0}
.b{display:flex;flex:1;min-height:0;overflow:hidden}.t{flex:1}.r{height:26px;font-size:12.500px;line-height:31px;overflow:hidden}.r span{padding-left:5px}.r span:first-child{padding-left:4px}.r:nth-child(even){background:#f5f7f7}
.s{width:17px;background:#f0f0f0;display:flex;flex-direction:column;align-items:center;box-sizing:border-box;padding:7px 2px 5px 0}.s div{width:15px;height:259px;margin-top:7px;margin-bottom:auto;box-sizing:border-box;border:1px solid #999da0;border-radius:2px;background:linear-gradient(90deg,#fafafa,#e8e8ea 45%,#cfcfd3 55%,#d9d9dc);display:flex;align-items:center;justify-content:center}</style>
<div class="h">${t('ID',13)+t('NAME',37)+t('AGE',27)+t('EMAIL',39)}<span></span><span><svg width="13" height="13"><circle cx="6.500" cy="6.500" r="5.200" fill="#ececec" stroke="#999"/><path d="M5.200 3.500L8.500 6.500 5.200 9.500z"/></svg></span></div>
<div class="b"><div class="t">${ROWS.map((r,i)=>`<div class="r">${t(i+1,i>8?13:6)+t(r[0],r[1])+t(r[2],13)+t(r[3],r[4])+t(r[5],r[5].length>10?73:66)}</div>`).join('')}</div><div class="s"><svg width="8" height="4" style="flex:none"><path d="M0 4h8L4 0z" fill="#444"/></svg><div><svg width="7" height="8"><path d="M0 .5h7M0 3.500h7M0 6.500h7" stroke="#666"/></svg></div><svg width="8" height="4" style="flex:none"><path d="M0 0h8L4 4z" fill="#444"/></svg></div></div>`;});
define('web-app',`<style>:host{display:block;width:1312px;height:623px;border-radius:0 0 12px 12px;background:#fff}.m{display:flex;height:498px;position:relative;border-right:1px solid #b2b6b8;border-bottom:1px solid #b2b6b8;box-sizing:content-box;width:1311px}.s{width:8px;margin-left:-1px;box-sizing:border-box;border:1px solid #b2b6b8;border-width:0 1px;background:#e0e4e5;flex:none}.g{flex:1;display:flex;flex-direction:column;position:relative;min-width:0}.f{height:10px;box-sizing:border-box;border:1px solid #b2b6b8;border-top:0;border-radius:0 0 11px 11px;background:#fdfdfd}</style><app-header></app-header><app-tabs></app-tabs><div class="m"><side-panel></side-panel><div class="s"></div><div class="g"><sub-tabs></sub-tabs><tool-bar></tool-bar><data-grid></data-grid><export-menu></export-menu></div></div><div class="f"></div>`);

/* Windows taskbar */
define('task-item',el=>`<style>:host{display:flex;align-items:center;justify-content:center;box-sizing:border-box;width:${el.getAttribute('w')||58}px;height:38px;margin-right:4px;flex:none;border:1px solid transparent;border-radius:3px}
:host([open]){border-color:#9db5ce;outline:1px solid #102c4bb0;background:linear-gradient(155deg,#ffffff78,#ffffff3a 48%,#ffffff15 52%,#ffffff20)}:host([active]){background:linear-gradient(155deg,#e9f1fa,#9fb7d0 48%,#7499bf 52%,#88a9c9);border-color:#d8e5f3}</style><x-icon name="${el.getAttribute('icon')}" w="${el.getAttribute('iw')||31}" h="${el.getAttribute('ih')||31}"></x-icon>`);
define('task-bar',`<style>:host{display:flex;height:40px;box-sizing:border-box;border-top:1px solid #07101b;box-shadow:inset 0 1px #9bb0c5a0;background:linear-gradient(#0a1a2c50,#0a1a2c10 30%,#0000 80%),linear-gradient(90deg,#173d63,#23598f 8%,#29639c 48%,#1c4b7b 58%,#163d65 80%,#102f52);padding-top:1px;align-items:center}.c{margin-left:10px;width:62px;text-align:center;color:#fff;font-size:12px;line-height:17px}.c fit-text{text-align:left}.t{margin-left:auto}.d{width:14px;height:39px;box-sizing:border-box;margin-left:11px;border:1px solid #7790a8;background:linear-gradient(150deg,#9ab0c580,#ffffff10 60%)}</style>
<task-item w="54" icon="start" iw="38" ih="38"></task-item><task-item w="60" icon="ie" iw="34" ih="34"></task-item><task-item open icon="explorer" iw="34" ih="29"></task-item><task-item open icon="outlook"></task-item><task-item icon="eclipse" w="58" iw="31" ih="29"></task-item><task-item open active icon="firefox" iw="33" ih="32" w="54"></task-item><task-item w="2" open icon="plus" iw="0" ih="0" style="margin:0 4px 0 -2px"></task-item><task-item open icon="jee" iw="32" ih="32"></task-item><task-item open icon="pdf" iw="30" ih="28"></task-item><task-item open icon="skype"></task-item><task-item open icon="paint" iw="33" ih="33"></task-item><task-item open icon="npp" iw="32" ih="32"></task-item>
<x-icon class="t" name="tray" w="90" h="20"></x-icon><div class="c"><fit-text w="27">17:11</fit-text><fit-text w="58">27-08-2012</fit-text></div><div class="d"></div>`);
define('desk-top',`<style>:host{display:flex;flex-direction:column;width:1366px;height:768px;background:#0c2340;position:relative}.w{position:relative;height:728px;box-sizing:border-box;border:1px solid #0a1726;border-bottom:1px solid #07101b;border-radius:6px 6px 7px 7px;overflow:hidden;background:#225b93;box-shadow:inset 1px 1px #d8e6f4,inset -1px -1px #b9d5ea}.ch{position:relative;height:85px;margin:0 -1px;border-radius:6px 6px 0 0;display:flex;flex-direction:column;overflow:hidden}.ch>*:not(persona-art){position:relative}.tb{height:24px;box-shadow:inset 0 2px #a5c8e4;margin-top:-1px}.v{display:flex;padding:0 7px 0 8px;height:635px;background:linear-gradient(90deg,#a4bedb,#92b0d2) 1px 0/7px 115px no-repeat,linear-gradient(#6d92b3,#2d5f8c 100px) 1357px 0/6px 635px no-repeat}.pg{width:1348px;height:635px;box-sizing:border-box;padding:0 18px;background:linear-gradient(#f2f4f6,#eceff0 30%,#e7eaea);border:1px solid #1c2b3a;border-width:0 0 1px 0}.edge{position:absolute;left:1px;top:4px;width:7px;height:82px;background:linear-gradient(#5683ac,#a4bedb)}.edge2{position:absolute;right:1px;top:8px;width:6px;height:78px;background:#7fa0bd}</style>
<div class="w"><div class="ch"><persona-art></persona-art><title-bar class="tb"></title-bar><tab-strip></tab-strip><nav-bar style="margin:0 8px 0 9px"></nav-bar></div><div class="edge"></div><div class="edge2"></div><div class="v"><div class="pg"><web-app></web-app></div></div></div><task-bar></task-bar>`);

fitQueue.forEach(el=>{const s=el.shadowRoot.querySelector('span'),w=+el.getAttribute('w');el.style.width=w+'px';const n=s.getBoundingClientRect().width;if(n)s.style.transform=`scaleX(${w/n})`;});
</script>
</body>
</html>
